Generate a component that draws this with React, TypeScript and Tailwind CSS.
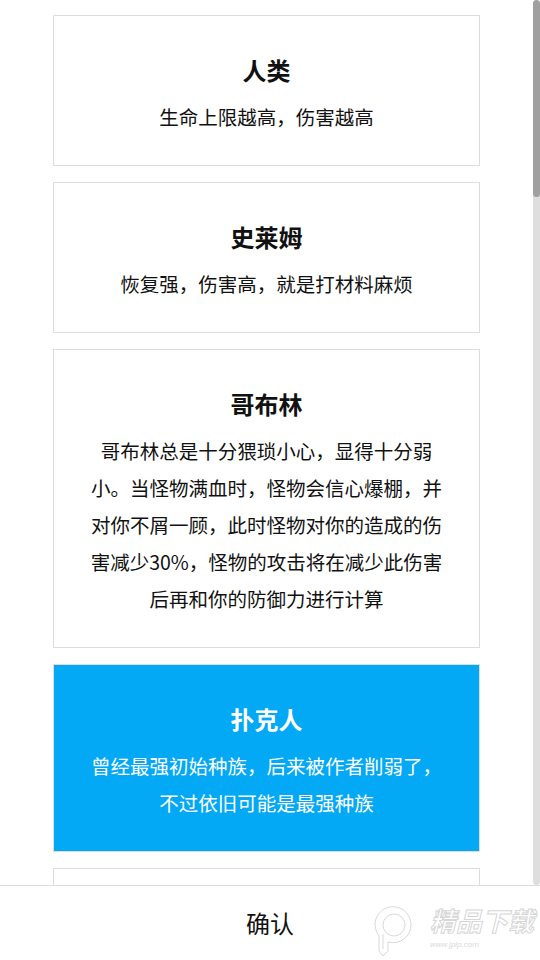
import React from 'react'

type Race = {
  name: string
  desc: string
  active?: boolean
}

const races: Race[] = [
  { name: '人类', desc: '生命上限越高，伤害越高' },
  { name: '史莱姆', desc: '恢复强，伤害高，就是打材料麻烦' },
  {
    name: '哥布林',
    desc: '哥布林总是十分猥琐小心，显得十分弱小。当怪物满血时，怪物会信心爆棚，并对你不屑一顾，此时怪物对你的造成的伤害减少30%，怪物的攻击将在减少此伤害后再和你的防御力进行计算',
  },
  { name: '扑克人', desc: '曾经最强初始种族，后来被作者削弱了，不过依旧可能是最强种族', active: true },
]

const RaceCard = ({ race }: { race: Race }) => {
  const box = race.active ? 'bg-[#03a9f4] text-white' : 'bg-white text-[#111]'
  return (
    <div className={`shrink-0 border border-[#dddddd] px-[36px] pt-[38px] pb-[30px] text-center ${box}`}>
      <div className="text-[24px] leading-[32px] font-bold">{race.name}</div>
      <p className="mt-3 text-[19.5px] leading-[37px]">{race.desc}</p>
    </div>
  )
}

// faint site mark in the lower right corner
const Watermark = () => (
  <div className="pointer-events-none absolute right-[6px] bottom-[3px] flex items-start gap-[16px] text-[#d9d9d9]">
    <svg width="40" height="52" viewBox="0 0 40 52" fill="none" stroke="currentColor" strokeWidth="1">
      <path d="M5 31 A18 18 0 1 1 14 37 L14 46 L9 51 L5 46 Z" />
      <circle cx="20" cy="20" r="11" />
      <path d="M9 29 L9 44" />
    </svg>
    <div className="flex flex-col">
      <span className="text-[26px] leading-[30px] font-bold italic text-transparent [-webkit-text-stroke:1px_#d6d6d6]">
        精品下载
      </span>
      <span className="mt-[5px] text-[8px] leading-[9px] italic font-['Liberation_Sans',sans-serif]">www.jplp.com</span>
    </div>
  </div>
)

export default function App() {
  return (
    <div className="flex h-screen flex-col bg-white font-['Noto_Sans_CJK_SC',sans-serif]">
      <div className="flex min-h-0 flex-1">
        <div className="flex flex-1 flex-col gap-4 overflow-hidden px-[53px] pt-[15px]">
          {races.map((r) => (
            <RaceCard key={r.name} race={r} />
          ))}
          {/* next card, scrolled below the fold */}
          <div className="h-[150px] shrink-0 border border-[#dddddd] bg-white" />
        </div>
        <div className="flex w-[7px] flex-col rounded-full bg-[#dedede]">
          <div className="h-[197px] rounded-full bg-[#a0a0a0]" />
        </div>
      </div>
      <div className="relative flex h-[75px] shrink-0 items-center justify-center border-t border-[#dddddd]">
        <span className="text-[24px] leading-[32px] text-[#111]">确认</span>
        <Watermark />
      </div>
    </div>
  )
}
